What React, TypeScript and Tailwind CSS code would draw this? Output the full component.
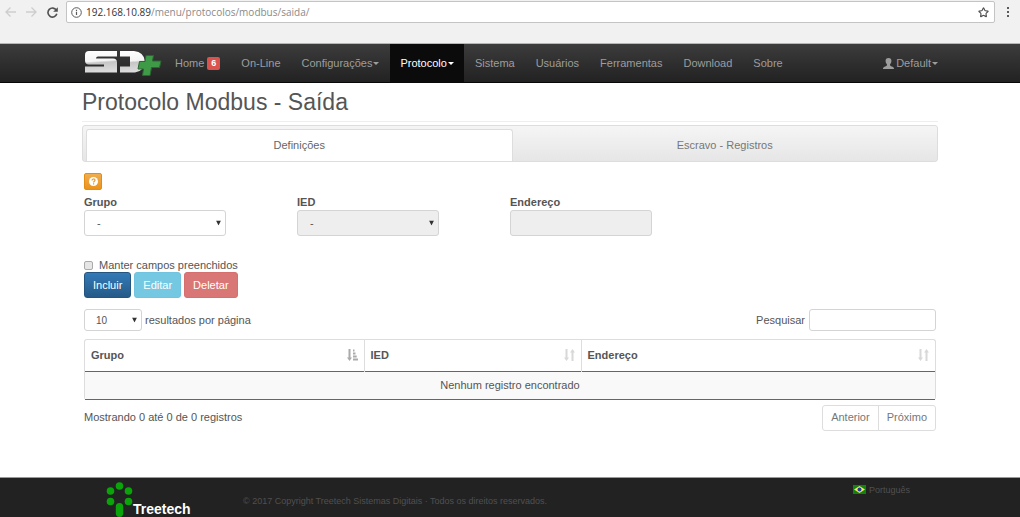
import type { ReactNode } from 'react';
import { LuStar } from 'react-icons/lu';

const navItems = [
  { label: 'Home', badge: 6 },
  { label: 'On-Line' },
  { label: 'Configurações', caret: true },
  { label: 'Protocolo', caret: true, active: true },
  { label: 'Sistema' },
  { label: 'Usuários' },
  { label: 'Ferramentas' },
  { label: 'Download' },
  { label: 'Sobre' },
];

function Caret() {
  return <span className="ml-px inline-block border-x-[3px] border-t-[3px] border-x-transparent border-t-current align-middle" />;
}

function BrowserBar() {
  return (
    <div className="flex h-11 items-start border-b border-[#b6b6b6] bg-[#f1f1f1] pt-px">
      <div className="flex h-[22px] w-[66px] items-center gap-[10px] pl-[5px]">
        <button type="button" aria-label="Voltar">
          <svg className="h-[10px] w-[11px]" viewBox="0 0 11 10" fill="none" stroke="#cecece" strokeWidth="1.4">
            <path d="M11 5H1M5.5 .5 1 5l4.5 4.5" />
          </svg>
        </button>
        <button type="button" aria-label="Avançar">
          <svg className="h-[10px] w-[11px]" viewBox="0 0 11 10" fill="none" stroke="#cecece" strokeWidth="1.4">
            <path d="M0 5h10M5.5 .5 10 5 5.500 9.500" />
          </svg>
        </button>
        <button type="button" aria-label="Recarregar">
          <svg className="h-[11px] w-[11px]" viewBox="0 0 11 11" fill="none" stroke="#505050" strokeWidth="1.6">
            <path d="M9.300 3.200A4.500 4.500 0 1 0 9.800 6.800" />
            <path d="M10.800 .2v4.600H6.200z" fill="#505050" stroke="none" />
          </svg>
        </button>
      </div>
      <div className="flex h-[22px] flex-1 items-center rounded-[2px] border border-[#c4c4c4] bg-white pr-[5px] pl-1 font-['Open_Sans',sans-serif] text-[10px]">
        <svg className="h-[11px] w-[11px] shrink-0" viewBox="0 0 11 11" fill="none" stroke="#5a5a5a">
          <circle cx="5.500" cy="5.500" r="4.800" />
          <path d="M5.500 4.800v3.200M5.500 2.700v1.200" strokeWidth="1.200" />
        </svg>
        <span className="ml-1 flex-1 text-[#8a8a8a]">
          <span className="text-[#333]">192.168.10.89</span>/menu/protocolos/modbus/saida/
        </span>
        <button type="button" aria-label="Favoritos">
          <LuStar className="h-[11px] w-[11px] text-[#505050]" strokeWidth={2.5} />
        </button>
      </div>
      <button type="button" aria-label="Menu" className="flex h-[22px] w-[25px] flex-col items-center justify-center gap-[2px]">
        <span className="size-[2px] bg-[#5a5a5a]" />
        <span className="size-[2px] bg-[#5a5a5a]" />
        <span className="size-[2px] bg-[#5a5a5a]" />
      </button>
    </div>
  );
}

function SdLogo() {
  return (
    <svg className="h-[27px] w-[78px]" viewBox="0 0 78 27" role="img" aria-label="SD+">
      <defs>
        <linearGradient id="metal" x1="0" y1="0" x2=".1" y2="1">
          <stop offset="0" stopColor="#ffffff" />
          <stop offset=".5" stopColor="#f4f4f4" />
          <stop offset=".58" stopColor="#c6c6c6" />
          <stop offset="1" stopColor="#dcdcdc" />
        </linearGradient>
      </defs>
      <path
        d="M5 1H33V6.500H14Q12 6.500 12 8.500H29Q33 8.500 33 12.500V22.500H1V16.500H20V14.500H5Q1 14.500 1 10.500V5Q1 1 5 1Z"
        fill="url(#metal)"
      />
      <path
        d="M36 1H50Q60 2 61 11.500Q60 21.500 51 22.500H36V16.500H46V6.500H36Z"
        fill="url(#metal)"
      />
      <path
        d="M62 5.500H69.500L68.500 11H77L75.500 17.500H67.500L66 25.500H58.500L59.500 19H54L55.500 11.500H61Z"
        fill="#3f9a48"
        stroke="#2b6631"
      />
    </svg>
  );
}

function Navbar() {
  return (
    <header className="border-b border-[#080808] bg-linear-to-b from-[#3c3c3c] to-[#222]">
      <div className="mx-auto flex h-[38px] max-w-[856px] items-stretch">
        <a href="#" className="flex w-[83px] items-center pl-[2px]">
          <SdLogo />
        </a>
        <nav className="flex flex-1 gap-px text-[11px] text-[#9d9d9d]">
          {navItems.map((item) => (
            <a
              key={item.label}
              href="#"
              className={`flex items-center px-[10px] ${item.active ? 'bg-[#0b0b0b] text-white' : ''}`}
            >
              {item.label}
              {item.badge && (
                <span className="ml-[3px] rounded-[2px] bg-[#d9534f] px-1 text-[9px] leading-[13px] font-bold text-white">
                  {item.badge}
                </span>
              )}
              {item.caret && <Caret />}
            </a>
          ))}
          <a href="#" className="ml-auto flex items-center gap-[2px]">
            <svg className="h-[11px] w-[11px]" viewBox="0 0 11 11" fill="currentColor">
              <path d="M5.500 0C7.500 0 8.500 1.200 8.400 3c0 1.700-.8 2.800-1.400 3.400 0 1.200.5 1.500 2 2C10.300 9 11 9.300 11 11H0c0-1.700.7-2 2-2.600 1.500-.5 2-.8 2-2C3.400 5.800 2.600 4.700 2.600 3 2.500 1.200 3.500 0 5.500 0Z" />
            </svg>
            <span>Default<Caret /></span>
          </a>
        </nav>
      </div>
    </header>
  );
}

function Field({ id, label, children }: { id: string; label: string; children: ReactNode }) {
  return (
    <div className="pr-[71px]">
      <label htmlFor={id} className="block leading-4 font-bold">
        {label}
      </label>
      {children}
    </div>
  );
}

interface DropdownProps {
  id: string;
  value: string;
  disabled?: boolean;
  className: string;
}

function Dropdown({ id, value, disabled, className }: DropdownProps) {
  return (
    <div className="relative">
      <select
        id={id}
        disabled={disabled}
        className={`block appearance-none rounded-[3px] border border-[#d4d4d4] bg-white text-[#555] disabled:bg-[#eee] disabled:opacity-100 ${className}`}
      >
        <option>{value}</option>
      </select>
      <svg className="pointer-events-none absolute top-1/2 right-[5px] h-[5px] w-[5px] -translate-y-1/2" viewBox="0 0 5 5" fill="#333">
        <path d="M0 0h5L2.500 5z" />
      </svg>
    </div>
  );
}

function SortIcon({ sorted }: { sorted?: boolean }) {
  if (sorted) {
    return (
      <svg className="h-3 w-[11px]" viewBox="0 0 11 12" fill="#aaa">
        <path d="M1.500 0h2v8.500H5L2.500 12 0 8.500h1.500zM6 .5h1.500v2H6zM6 3.500h2.500v2H6zM6 6.500h3.700v2H6zM6 9.500h5v2H6z" />
      </svg>
    );
  }
  return (
    <svg className="h-3 w-[11px]" viewBox="0 0 11 12" fill="#d8d8d8">
      <path d="M1.500 0h2v8.500H5L2.500 12 0 8.500h1.500zM7.500 12h2V3.500H11L8.500 0 6 3.500h1.500z" />
    </svg>
  );
}

function RecordsTable() {
  const columns = [
    { label: 'Grupo', width: 'w-[279px]', sorted: true },
    { label: 'IED', width: 'w-[217px]' },
    { label: 'Endereço', width: '' },
  ];

  return (
    <div className="mt-2 rounded-[3px] border-x border-t border-[#ddd]">
      <table className="w-full table-fixed border-collapse">
        <thead>
          <tr className="h-[31px] border-b border-[#666]">
            {columns.map((col) => (
              <th key={col.label} className={`border-r border-[#ddd] px-[6px] text-left last:border-r-0 ${col.width}`}>
                <span className="flex items-center justify-between">
                  {col.label}
                  <SortIcon sorted={col.sorted} />
                </span>
              </th>
            ))}
          </tr>
        </thead>
        <tbody>
          <tr className="h-7 border-b border-[#666] bg-[#f9f9f9]">
            <td colSpan={3} className="text-center">
              Nenhum registro encontrado
            </td>
          </tr>
        </tbody>
      </table>
    </div>
  );
}

function Footer() {
  return (
    <footer className="mt-[46px] border-t border-[#999] bg-[#222] text-[#505050]">
      <div className="mx-auto flex h-[39px] max-w-[856px] items-start pr-7 pl-6">
        <div className="flex w-[137px] items-start pt-1">
          <svg className="h-[35px] w-[27px] shrink-0" viewBox="0 0 27 35" fill="#0aa30a">
            <circle cx="13.500" cy="4" r="3.800" />
            <circle cx="4.500" cy="9" r="3.800" />
            <circle cx="22.500" cy="9" r="3.800" />
            <circle cx="4.500" cy="19.500" r="3.800" />
            <circle cx="22.500" cy="19.500" r="3.800" />
            <rect x="9.800" y="21" width="7.400" height="14" rx="3.700" />
          </svg>
          <span className="pt-5 text-[14px] leading-[15px] font-bold text-white">Treetech</span>
        </div>
        <p className="pt-4 text-[9px] leading-[14px]">
          © 2017 Copyright Treetech Sistemas Digitais · Todos os direitos reservados.
        </p>
        <a href="#" className="ml-auto flex items-center gap-[3px] pt-[5px] text-[9px] leading-[14px]">
          <svg className="h-[9px] w-[13px]" viewBox="0 0 13 9">
            <rect width="13" height="9" fill="#12820f" />
            <path d="M6.500 1 12 4.500 6.500 8 1 4.500z" fill="#f5e663" />
            <circle cx="6.500" cy="4.500" r="2" fill="#27388f" />
          </svg>
          Português
        </a>
      </div>
    </footer>
  );
}

export default function App() {
  return (
    <div className="bg-white font-['Liberation_Sans',Arial,sans-serif] text-[11px] text-[#555]">
      <BrowserBar />
      <Navbar />

      <main className="mx-auto max-w-[856px]">
        <h1 className="border-b border-[#eee] pt-1 pb-1 text-[23px] leading-[30px]">Protocolo Modbus - Saída</h1>

        <div role="tablist" className="mt-[3px] flex h-[37px] rounded-[3px] border border-[#ddd] bg-linear-to-b from-[#f5f5f5] to-[#e6e6e6] pt-[3px] pl-[3px] text-[#777]">
          <button type="button" role="tab" aria-selected="true" className="flex-1 rounded-t-[3px] border border-b-0 border-[#ddd] bg-white text-[#666]">
            Definições
          </button>
          <button type="button" role="tab" aria-selected="false" className="flex-1">
            Escravo - Registros
          </button>
        </div>

        {/* Form */}
        <div className="px-[2px] pt-[11px]">
          <button type="button" aria-label="Ajuda" className="flex h-[17px] w-[18px] items-center justify-center rounded-[2px] border border-[#e38d13] bg-linear-to-b from-[#f0ad4e] to-[#eb9316]">
            <svg className="h-[9px] w-[9px]" viewBox="0 0 9 9">
              <circle cx="4.500" cy="4.500" r="4.500" fill="#fff" />
              <path d="M3 3.500C3 1.500 6 1.500 6 3.300 6 4.300 4.600 4.200 4.600 5.500M4.600 6.300v1.200" fill="none" stroke="#e8982b" strokeWidth="1.200" />
            </svg>
          </button>

          <div className="mt-1 grid grid-cols-4">
            <Field id="grupo" label="Grupo">
              <Dropdown id="grupo" value="-" className="h-[26px] w-full pl-3" />
            </Field>
            <Field id="ied" label="IED">
              <Dropdown id="ied" value="-" disabled className="h-[26px] w-full pl-3" />
            </Field>
            <Field id="endereco" label="Endereço">
              <input id="endereco" disabled className="block h-[26px] w-full rounded-[3px] border border-[#d4d4d4] bg-[#eee] px-2" />
            </Field>
          </div>

          <label className="mt-[22px] flex items-center gap-[6px] leading-[14px]">
            <input type="checkbox" className="size-[9px] appearance-none rounded-[2px] border border-[#aaa] bg-[#e6e6e6]" />
            Manter campos preenchidos
          </label>

          <div className="flex gap-[3px] text-white">
            <button type="button" className="h-[26px] rounded-[3px] border border-[#245580] bg-linear-to-b from-[#337ab7] to-[#265a88] px-2">
              Incluir
            </button>
            <button type="button" disabled className="h-[26px] rounded-[3px] border border-[#70c4df] bg-[#74c8e2] px-2">
              Editar
            </button>
            <button type="button" disabled className="h-[26px] rounded-[3px] border border-[#d5706e] bg-[#d87775] px-2">
              Deletar
            </button>
          </div>

          <div className="mt-[11px] flex items-center justify-between">
            <div className="flex items-center gap-[3px]">
              <Dropdown id="resultados" value="10" className="h-[22px] w-[58px] pl-[11px] text-[10px]" />
              <label htmlFor="resultados">resultados por página</label>
            </div>
            <label className="flex items-center gap-1">
              Pesquisar
              <input type="search" className="h-[22px] w-[127px] rounded-[3px] border border-[#d4d4d4] px-2" />
            </label>
          </div>

          <RecordsTable />

          <div className="mt-[5px] flex items-start justify-between">
            <p className="pt-1 leading-4">Mostrando 0 até 0 de 0 registros</p>
            <div className="flex h-[26px] rounded-[3px] border border-[#ddd] text-[#777]">
              <button type="button" className="border-r border-[#ddd] px-2">
                Anterior
              </button>
              <button type="button" className="px-2">
                Próximo
              </button>
            </div>
          </div>
        </div>
      </main>

      <Footer />
    </div>
  );
}
